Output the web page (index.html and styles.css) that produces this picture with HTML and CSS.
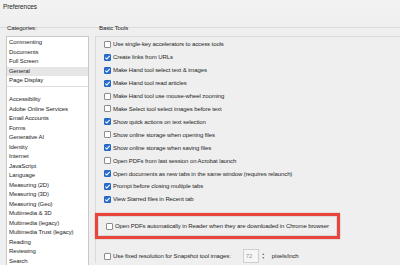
FILE: index.html
```html
<!DOCTYPE html>
<html lang="en">
<head>
  <meta charset="UTF-8">
  <title>Preferences</title>
  <link rel="stylesheet" href="styles.css">
</head>
<body>
  <header class="titlebar">Preferences</header>

  <main class="prefs">
    <aside class="cats">
      <div class="cats-label">Categories:</div>
      <ul class="cat-list">
        <li>Commenting</li>
        <li>Documents</li>
        <li>Full Screen</li>
        <li class="active">General</li>
        <li>Page Display</li>
        <li class="sep"></li>
        <li>Accessibility</li>
        <li>Adobe Online Services</li>
        <li>Email Accounts</li>
        <li>Forms</li>
        <li>Generative AI</li>
        <li>Identity</li>
        <li>Internet</li>
        <li>JavaScript</li>
        <li>Language</li>
        <li>Measuring (2D)</li>
        <li>Measuring (3D)</li>
        <li>Measuring (Geo)</li>
        <li>Multimedia &amp; 3D</li>
        <li>Multimedia (legacy)</li>
        <li>Multimedia Trust (legacy)</li>
        <li>Reading</li>
        <li>Reviewing</li>
        <li>Search</li>
      </ul>
    </aside>

    <section class="tools">
      <div class="group-label">Basic Tools</div>
      <div class="group">
        <div class="opt"><span class="box"></span>Use single-key accelerators to access tools</div>
        <div class="opt"><span class="box on"></span>Create links from URLs</div>
        <div class="opt"><span class="box on"></span>Make Hand tool select text &amp; images</div>
        <div class="opt"><span class="box on"></span>Make Hand tool read articles</div>
        <div class="opt"><span class="box"></span>Make Hand tool use mouse-wheel zooming</div>
        <div class="opt"><span class="box"></span>Make Select tool select images before text</div>
        <div class="opt"><span class="box on"></span>Show quick actions on text selection</div>
        <div class="opt"><span class="box"></span>Show online storage when opening files</div>
        <div class="opt"><span class="box on"></span>Show online storage when saving files</div>
        <div class="opt"><span class="box"></span>Open PDFs from last session on Acrobat launch</div>
        <div class="opt"><span class="box on"></span>Open documents as new tabs in the same window (requires relaunch)</div>
        <div class="opt"><span class="box on"></span>Prompt before closing multiple tabs</div>
        <div class="opt"><span class="box on"></span>View Starred files in Recent tab</div>

        <div class="callout">
          <div class="opt"><span class="box"></span>Open PDFs automatically in Reader when they are downloaded in Chrome browser</div>
        </div>

        <div class="opt snap">
          <span class="box"></span>Use fixed resolution for Snapshot tool images:
          <span class="num">72</span>
          <span class="spin"><i>&#9650;</i><i>&#9660;</i></span>
          <span class="unit">pixels/inch</span>
        </div>
      </div>
    </section>
  </main>
</body>
</html>
```

FILE: styles.css
```css
* {
  margin: 0;
  padding: 0;
  box-sizing: border-box;
}

body {
  width: 400px;
  height: 265px;
  overflow: hidden;
  background: #efefef;
  color: #262626;
  font-family: 'Liberation Sans', Arial, sans-serif;
  font-size: 6px;
  letter-spacing: -0.1px;
}

.titlebar {
  height: 28px;
  padding: 3px 3px 0;
  line-height: 8px;
  font-size: 6.5px;
  background: linear-gradient(#f3f3f3, #efefef);
  border-bottom: 1px solid #dcdcdc;
}

.prefs {
  display: flex;
}

/* categories */
.cats {
  width: 89px;
  padding-left: 6px;
}

.cats-label {
  height: 9px;
  line-height: 3px;
  padding: 0 0 0 1px;
  margin-top: -1px;
}

.cat-list {
  list-style: none;
  background: #fff;
  border: 1px solid #c8c8c8;
  height: 240px;
  padding-top: 1px;
}

.cat-list li {
  height: 9.5px;
  line-height: 9.5px;
  padding-left: 2px;
  white-space: nowrap;
}

.cat-list li.active {
  background: #e6e6e6;
}

.cat-list li.sep {
  position: relative;
}

.cat-list li.sep::after {
  content: '';
  position: absolute;
  left: 0;
  right: 0;
  top: 0;
  height: 1px;
  background: #dedede;
}

/* basic tools */
.tools {
  flex: 1;
  padding-left: 6px;
}

.group-label {
  height: 9px;
  line-height: 3px;
  padding-left: 4px;
  margin-top: -1px;
}

.group {
  border-left: 1px solid #dadada;
  border-top: 1px solid #dadada;
  padding-left: 8px;
  padding-top: 1px;
}

.opt {
  display: flex;
  align-items: center;
  height: 12.92px;
  white-space: nowrap;
}

.box {
  width: 7px;
  height: 7px;
  margin-right: 2px;
  flex: none;
  background: #fff;
  border: 1px solid #8d8d8d;
  border-radius: 1px;
}

.box.on {
  border-color: #2466c4;
  background: #2a6fcf url("data:image/svg+xml,%3Csvg xmlns='http://www.w3.org/2000/svg' viewBox='0 0 7 7'%3E%3Cpolyline points='1.3,3.6 2.8,5 5.7,1.8' fill='none' stroke='white' stroke-width='1.1'/%3E%3C/svg%3E") center / 7px 7px no-repeat;
}

.callout {
  width: 245px;
  margin: 7.5px 0 0 -9px;
  padding: 3.5px 0 3.5px 8px;
  border: 3px solid #e8453c;
  box-shadow: 0 0 1px rgba(120, 30, 20, 0.5), inset 0 0 0 1px #d9d9d9;
}

.snap {
  height: 14px;
  margin-top: 10px;
}

.num {
  width: 16px;
  height: 14px;
  margin-left: 12px;
  padding-left: 2px;
  line-height: 12px;
  color: #9a9a9a;
  background: #f6f6f6;
  border: 1px solid #cfcfcf;
}

.spin {
  display: flex;
  flex-direction: column;
  margin-left: 3px;
  font-size: 3px;
  color: #555;
}

.spin i {
  font-style: normal;
  line-height: 4px;
}

.unit {
  margin-left: 7px;
}
```
